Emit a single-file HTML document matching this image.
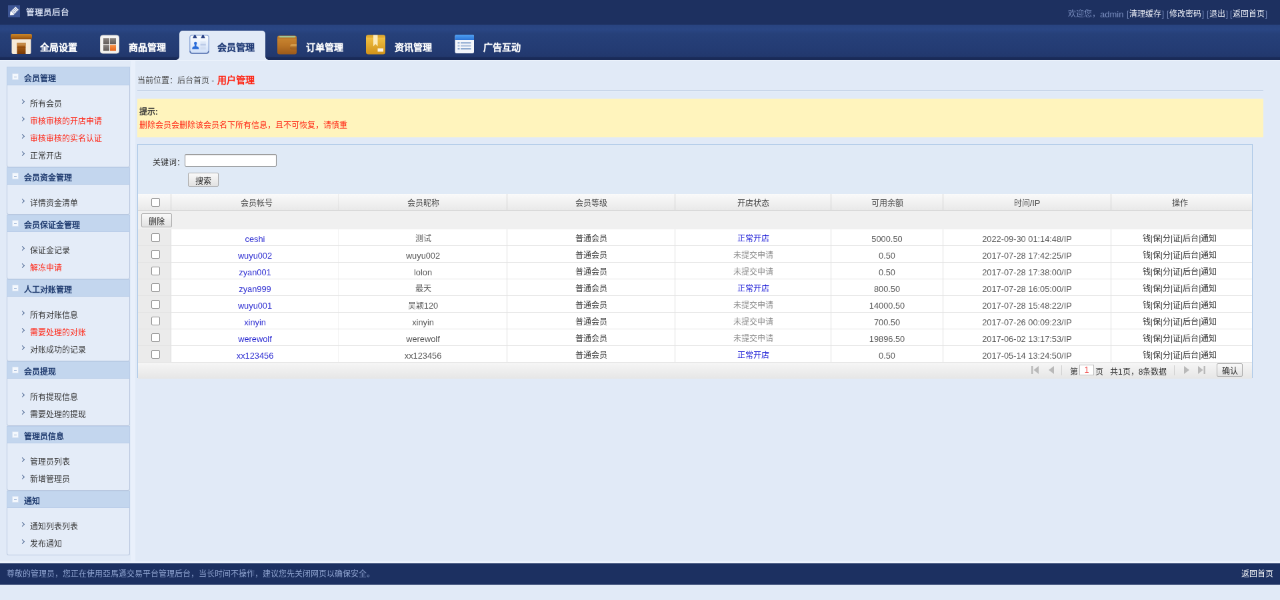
<!DOCTYPE html>
<html lang="zh-CN">
<head>
<meta charset="utf-8">
<title>管理员后台</title>
<style>
*{box-sizing:border-box;margin:0;padding:0}
html,body{width:1280px;height:600px;overflow:hidden;background:#e1eaf7}
body{font-family:"Liberation Sans",sans-serif;font-size:12px;color:#333}
a{text-decoration:none;color:inherit}
ul{list-style:none}
#stage{position:absolute;left:0;top:0;width:1920px;height:900px;transform:scale(0.666667);transform-origin:0 0;background:#e1eaf7;overflow:hidden;will-change:transform}
/* top bar */
#top{position:absolute;left:0;top:0;width:1920px;height:89px;background:#1d3060;color:#fff}
#top .logo{position:absolute;left:12px;top:8px;width:18px;height:18px}
#top .title{position:absolute;left:39px;top:0;line-height:37px;font-family:"Liberation Sans",sans-serif;font-weight:bold;font-size:12.5px;color:#d3dbee;line-height:38px}
#top .user span{position:absolute;top:0;line-height:43px;font-size:12px;color:#7b8fc0;white-space:nowrap}
#top .user a{color:#f0f3fa;padding:0 .7px}
/* nav */
#nav{position:absolute;left:0;top:37px;width:1920px;height:52.5px;background:linear-gradient(#28437f 0,#2a4684 7px,#264079 14px,#243c74 34px,#22386d 48px,#1a2b58 49.5px,#1a2b58 53px)}
#vband{position:absolute;left:195.5px;top:90px;width:7.5px;height:755px;background:#e9f0fb}
#hband{position:absolute;left:0;top:841.5px;width:1920px;height:3.5px;background:#ecf2fc}
#navline{position:absolute;left:0;top:89.5px;width:1920px;height:1.5px;background:#edf3fc}
#nav .tab{position:absolute;top:9px;width:129px;height:43px;color:#fff;font-size:14px;font-weight:bold;text-shadow:0 0 .7px rgba(255,255,255,.8)}
#nav .tab svg{position:absolute;left:15px;top:5px;width:30px;height:30px}
#nav .tab span{position:absolute;left:57px;top:0;line-height:50px;white-space:nowrap}
#nav .tab.on{background:#e1eaf7;border-radius:5px 5px 0 0;color:#1f3a75;height:44px;text-shadow:0 0 .7px rgba(31,58,117,.8)}
#nav .tab.on:before,#nav .tab.on:after{content:"";position:absolute;bottom:0;width:5px;height:5px}
#nav .tab.on:before{left:-5px;background:radial-gradient(circle at 0 0,rgba(225,234,247,0) 4.5px,#e1eaf7 5px)}
#nav .tab.on:after{right:-5px;background:radial-gradient(circle at 100% 0,rgba(225,234,247,0) 4.5px,#e1eaf7 5px)}
/* sidebar */
#side{position:absolute;left:10px;top:100px;width:185px}
#side h3{height:28px;line-height:35px;overflow:hidden;background:#c3d6ee;border:1px solid #b9cde8;font-size:12px;font-weight:bold;color:#1e3a6e;padding-left:25px;position:relative}
#side h3 i{position:absolute;left:7px;top:9px;width:10px;height:10px;background:#f4f8fd;border:1px solid #d5e1f2;border-radius:1px}
#side h3 i:after{content:"";position:absolute;left:2px;top:4px;width:4px;height:1px;background:#9db4d6}
#side h3:not(:first-child){margin-top:0;height:26px;line-height:31px}
#side h3:not(:first-child) i{top:7px}
#side ul{padding:13px 0 5px;background:#e4ecf8;border:1px solid #b9c7de;border-top:0;border-radius:0 0 3px 3px}
#side li{height:26px;line-height:30px;padding-left:34px;position:relative;color:#333;white-space:nowrap}
#side li.r{color:#f21}
#side li:before{content:"";position:absolute;left:20px;top:9px;width:4px;height:4px;border-right:1.5px solid #4a6590;border-top:1.5px solid #4a6590;transform:rotate(45deg)}
/* main */
#crumb{position:absolute;left:206px;top:100px;width:1689px;height:36px;line-height:40px;border-bottom:1px solid #bfcde3;box-shadow:0 1px 0 #e9f0fa;color:#444}
#crumb b{color:#f21;font-size:14px;margin-left:1.5px}
#tip{position:absolute;left:206px;top:148px;width:1689px;height:58px;background:#fff4bd;padding:10px 3px;line-height:20px}
#tip b{color:#333}
#tip p{color:#f21}
#panel{position:absolute;left:206px;top:216px;width:1673px;height:351px;border:1px solid #a9c6e6;background:#e0eaf6}

/* panel contents */
#panel .kw{position:absolute;left:22px;top:17px;line-height:20px;color:#333}
#panel .inp{position:absolute;left:70px;top:14px;width:138px;height:19px;background:#fff;border:1px solid #8f8f8f;border-radius:2px;box-shadow:inset 0 1px 1px #ccc}
.btn{position:absolute;height:21px;line-height:25px;overflow:hidden;text-align:center;border:1px solid #a8a8a8;border-radius:2px;background:linear-gradient(#f9f9f9,#e2e2e2);color:#222;font-size:12px}
#grid{position:absolute;left:0;top:74px;width:1671px}
#grid .row{position:relative;height:25px;display:flex;background:#fff;border-bottom:1px solid #e3e3e3}
#grid .row div{height:100%;line-height:29px;text-align:center;border-right:1px solid #dcdcdc;white-space:nowrap;overflow:hidden;color:#555;flex:none}
#grid .row div:last-child{border-right:0}
#grid .hd{height:25px;background:linear-gradient(#fafafa,#e9e9e9);border-bottom:1px solid #d3d3d3}
#grid .hd div{line-height:28px;color:#444;border-right:1px solid #cfcfcf}
#grid .tb{position:relative;height:28px;background:#f0f0f0}
#grid .c0{width:50px;background:#ebebeb}
#grid .hd .c0{background:none}
#grid .c1{width:252px}#grid .c2{width:252px}#grid .c3{width:252px}#grid .c4{width:234px}#grid .c5{width:168px}#grid .c6{width:252px}#grid .c7{width:211px;padding-right:6px}
#grid .row .c1{color:#2b2bd1}
#grid .row .c1,#grid .row .c2,#grid .row .c5,#grid .row .c6{font-size:12.8px}
#grid .row .c3,#grid .row .c7{color:#333}
#grid .row .ok{color:#1a1ad6}
#grid .row .no{color:#8a8a8a}
#grid .hd div{font-size:12px!important;color:#444!important}
#grid .hd .c1{padding-left:4px}
.cb{display:inline-block;width:13px;height:13px;border:1px solid #8a8a8a;border-radius:2px;background:#fff;vertical-align:middle;position:relative;top:-2.5px;left:1.5px}
#pager{position:relative;height:24px;background:linear-gradient(#f6f6f6,#e6e6e6);font-size:12px;color:#333}
#pager span{position:absolute;top:0;line-height:28px;white-space:nowrap}
#pager .pi{position:absolute;top:3px;width:22px;height:16px;background:#fff;border:1px solid #bdbdbd;color:#e33;text-align:center;line-height:15px}
#pager .sep{position:absolute;top:4px;width:1px;height:15px;background:#cfcfcf}
#pager svg{position:absolute;top:5px;height:12px}
/* footer */
#foot{position:absolute;left:0;top:845px;width:1920px;height:32px;background:#1c3061;color:#8ea3d0;line-height:33px;padding-left:10px}
#foot a{position:absolute;right:10px;top:0;color:#fff}
</style>
</head>
<body>
<div id="stage">
<div id="top">
  <svg class="logo" viewBox="0 0 18 18"><rect width="18" height="18" fill="#3d5594"/><g transform="rotate(-45 9 9)"><path d="M0.5 9 L4.5 5.6 H15.5 V12.4 H4.5Z" fill="#fff"/><path d="M6.6 5.6V12.4M8.9 5.6V12.4M11.2 5.6V12.4M13.5 5.6V12.4" stroke="#3d5594" stroke-width=".8"/></g></svg>
  <div class="title">管理员后台</div>
  <div class="user"><span style="left:1602px">欢迎您，</span><span style="left:1650px;font-size:13px">admin</span><span style="left:1690px">[<a>清理缓存</a>]</span><span style="left:1750px">[<a>修改密码</a>]</span><span style="left:1810px">[<a>退出</a>]</span><span style="left:1845px">[<a>返回首页</a>]</span></div>
</div>
<div id="nav">
  <div class="tab" style="left:3px"><svg viewBox="0 0 32 30" style="left:13px;width:32px"><defs><linearGradient id="g1a" x1="0" y1="0" x2="0" y2="1"><stop offset="0" stop-color="#cb8627"/><stop offset=".8" stop-color="#a05a12"/><stop offset="1" stop-color="#7e420b"/></linearGradient><linearGradient id="g1b" x1="0" y1="0" x2="0" y2="1"><stop offset="0" stop-color="#bb6d1e"/><stop offset="1" stop-color="#7a3a05"/></linearGradient></defs><rect x="1.5" y="3" width="29" height="27" rx="2" fill="#f6ead8"/><rect x="0" y="0" width="32" height="8" rx="2" fill="url(#g1a)"/><rect x="9.5" y="13" width="13" height="17" fill="url(#g1b)"/><rect x="9.5" y="13" width="13" height="4.5" fill="#c48a48"/><rect x="9.5" y="19.5" width="13" height="1" fill="#6d3204" opacity=".5"/></svg><span>全局设置</span></div>
  <div class="tab" style="left:136px"><svg viewBox="0 0 30 30" style="left:14px"><defs><linearGradient id="g2a" x1="0" y1="0" x2="0" y2="1"><stop offset="0" stop-color="#8b8581"/><stop offset="1" stop-color="#625c59"/></linearGradient><linearGradient id="g2b" x1="0" y1="0" x2="0" y2="1"><stop offset="0" stop-color="#f8954a"/><stop offset="1" stop-color="#e8651a"/></linearGradient></defs><rect x=".5" y="2" width="28" height="27" rx="3.5" fill="#f5f4f2" stroke="#dcd8d2" stroke-width="1"/><rect x="5" y="6.2" width="9" height="9" fill="url(#g2a)"/><rect x="15" y="6.2" width="9" height="9" fill="url(#g2a)"/><rect x="5" y="16.2" width="9" height="9" fill="url(#g2a)"/><rect x="15" y="16.2" width="9" height="9" fill="url(#g2b)"/></svg><span>商品管理</span></div>
  <div class="tab on" style="left:269px"><svg viewBox="0 0 30 30"><defs><linearGradient id="g3a" x1="0" y1="0" x2="0" y2="1"><stop offset="0" stop-color="#fdfeff"/><stop offset="1" stop-color="#cfdff8"/></linearGradient></defs><rect x=".75" y="1.75" width="28.5" height="27" rx="3.5" fill="url(#g3a)" stroke="#93acd9" stroke-width="1.5"/><path d="M1.2 25.5 Q1.2 29 4.5 29 H25.5 Q28.8 29 28.8 25.5" stroke="#5672ae" stroke-width="1.7" fill="none"/><path d="M5 6.3 L7.3 1.6 H9.3 L11.6 6.3Z M17.3 6.3 L19.5 1.6 H21.5 L23.7 6.3Z" fill="#2c4487"/><circle cx="9.2" cy="14" r="2.2" fill="#2a6cd8"/><path d="M8.1 15.5 H10.3 L10.7 18.5 C13 18.8 14.3 19.8 14.3 22.7 H4.2 C4.2 19.8 5.5 18.8 7.7 18.5Z" fill="#2a6cd8"/><rect x="16.5" y="11.3" width="8.3" height="2" fill="#dbe5f5"/><rect x="16.5" y="14.5" width="8.3" height="3" fill="#bccbe8"/><rect x="16.5" y="18.7" width="8.3" height="2" fill="#cfdbf0"/><rect x="16.5" y="21.7" width="8.3" height="1.3" fill="#c3d0e8"/></svg><span>会员管理</span></div>
  <div class="tab" style="left:402px"><svg viewBox="0 0 30 30" style="left:13.5px;top:6px"><defs><linearGradient id="g4a" x1="0" y1="0" x2="0" y2="1"><stop offset="0" stop-color="#cc8a33"/><stop offset=".5" stop-color="#bb7526"/><stop offset="1" stop-color="#9c5a1a"/></linearGradient></defs><rect x="0" y="1.5" width="29" height="28" rx="3" fill="url(#g4a)"/><rect x="3" y="2" width="24" height="2.5" rx="1" fill="#a3c694"/><rect x="0" y="4.5" width="29" height="1" fill="#a4621c" opacity=".7"/><path d="M29 14 H22 Q19.5 14 19.5 16.2 V18.5 Q19.5 20.8 22 20.8 H29Z" fill="#d29a4b"/><path d="M29 17.5 H19.5 V18.5 Q19.5 20.8 22 20.8 H29Z" fill="#a86a25"/><path d="M29 20.8 H22 Q19.5 20.8 19.3 18.5 L19.3 20 Q19.5 22 22 22 H29Z" fill="#7f4712" opacity=".7"/></svg><span>订单管理</span></div>
  <div class="tab" style="left:535px"><svg viewBox="0 0 30 30" style="left:13.5px;top:6px"><defs><linearGradient id="g5a" x1="0" y1="0" x2="0" y2="1"><stop offset="0" stop-color="#f4c648"/><stop offset="1" stop-color="#d1921a"/></linearGradient></defs><rect x="0" y=".5" width="29" height="29" rx="3.5" fill="url(#g5a)"/><rect x="0" y=".5" width="29" height="4" rx="2" fill="#d9a028" opacity=".7"/><path d="M11 .5 H17.5 V17.5 L14.25 14 L11 17.5Z" fill="#fbebbd"/><rect x="17.5" y="20.5" width="8.5" height="5" fill="#fbf3e2"/></svg><span>资讯管理</span></div>
  <div class="tab" style="left:668px"><svg viewBox="0 0 30 30" style="left:14px"><defs><linearGradient id="g6a" x1="0" y1="0" x2="0" y2="1"><stop offset="0" stop-color="#4fa0f2"/><stop offset="1" stop-color="#2c74d6"/></linearGradient></defs><rect x=".5" y="1" width="28.5" height="28" rx="2.5" fill="#f3f6fb"/><path d="M.5 9 V3.5 Q.5 1 3 1 H26.5 Q29 1 29 3.5 V9Z" fill="url(#g6a)"/><g fill="#8eaad0"><rect x="4.5" y="12.2" width="3" height="2.2"/><rect x="9" y="12.2" width="15.5" height="2.2"/><rect x="4.5" y="16.6" width="3" height="2.2" opacity=".7"/><rect x="9" y="16.6" width="15.5" height="2.2" opacity=".7"/><rect x="4.5" y="21" width="3" height="2.4"/><rect x="9" y="21" width="15.5" height="2.4"/></g></svg><span>广告互动</span></div>
</div>
<div id="vband"></div><div id="hband"></div><div id="navline"></div>
<div id="side">
  <h3><i></i>会员管理</h3>
  <ul><li>所有会员</li><li class="r">审核审核的开店申请</li><li class="r">审核审核的实名认证</li><li>正常开店</li></ul>
  <h3><i></i>会员资金管理</h3>
  <ul><li>详情资金清单</li></ul>
  <h3><i></i>会员保证金管理</h3>
  <ul><li>保证金记录</li><li class="r">解冻申请</li></ul>
  <h3><i></i>人工对账管理</h3>
  <ul><li>所有对账信息</li><li class="r">需要处理的对账</li><li>对账成功的记录</li></ul>
  <h3><i></i>会员提现</h3>
  <ul><li>所有提现信息</li><li>需要处理的提现</li></ul>
  <h3><i></i>管理员信息</h3>
  <ul><li>管理员列表</li><li>新增管理员</li></ul>
  <h3><i></i>通知</h3>
  <ul style="padding-bottom:5px"><li>通知列表列表</li><li>发布通知</li></ul>
</div>
<div id="crumb">当前位置：后台首页 - <b>用户管理</b></div>
<div id="tip"><b>提示:</b><p>删除会员会删除该会员名下所有信息，且不可恢复，请慎重</p></div>
<div id="panel">
<span class="kw">关键词：</span><div class="inp"></div><div class="btn" style="left:75px;top:42px;width:46px">搜索</div>
<div id="grid">
<div class="row hd"><div class="c0"><i class="cb"></i></div><div class="c1">会员帐号</div><div class="c2">会员昵称</div><div class="c3">会员等级</div><div class="c4">开店状态</div><div class="c5">可用余额</div><div class="c6">时间<span style="font-size:12.8px">/IP</span></div><div class="c7">操作</div></div>
<div class="tb"><div class="btn" style="left:5px;top:3.5px;width:46px">删除</div></div>
<div class="row"><div class="c0"><i class="cb"></i></div><div class="c1">ceshi</div><div class="c2" style="font-size:12px">测试</div><div class="c3">普通会员</div><div class="c4 ok">正常开店</div><div class="c5">5000.50</div><div class="c6">2022-09-30 01:14:48/IP</div><div class="c7">钱|保|分|证|后台|通知</div></div>
<div class="row"><div class="c0"><i class="cb"></i></div><div class="c1">wuyu002</div><div class="c2">wuyu002</div><div class="c3">普通会员</div><div class="c4 no">未提交申请</div><div class="c5">0.50</div><div class="c6">2017-07-28 17:42:25/IP</div><div class="c7">钱|保|分|证|后台|通知</div></div>
<div class="row"><div class="c0"><i class="cb"></i></div><div class="c1">zyan001</div><div class="c2">lolon</div><div class="c3">普通会员</div><div class="c4 no">未提交申请</div><div class="c5">0.50</div><div class="c6">2017-07-28 17:38:00/IP</div><div class="c7">钱|保|分|证|后台|通知</div></div>
<div class="row"><div class="c0"><i class="cb"></i></div><div class="c1">zyan999</div><div class="c2" style="font-size:12px">最天</div><div class="c3">普通会员</div><div class="c4 ok">正常开店</div><div class="c5">800.50</div><div class="c6">2017-07-28 16:05:00/IP</div><div class="c7">钱|保|分|证|后台|通知</div></div>
<div class="row"><div class="c0"><i class="cb"></i></div><div class="c1">wuyu001</div><div class="c2" style="font-size:12px">吴颖<span style="font-size:12.8px">120</span></div><div class="c3">普通会员</div><div class="c4 no">未提交申请</div><div class="c5">14000.50</div><div class="c6">2017-07-28 15:48:22/IP</div><div class="c7">钱|保|分|证|后台|通知</div></div>
<div class="row"><div class="c0"><i class="cb"></i></div><div class="c1">xinyin</div><div class="c2">xinyin</div><div class="c3">普通会员</div><div class="c4 no">未提交申请</div><div class="c5">700.50</div><div class="c6">2017-07-26 00:09:23/IP</div><div class="c7">钱|保|分|证|后台|通知</div></div>
<div class="row"><div class="c0"><i class="cb"></i></div><div class="c1">werewolf</div><div class="c2">werewolf</div><div class="c3">普通会员</div><div class="c4 no">未提交申请</div><div class="c5">19896.50</div><div class="c6">2017-06-02 13:17:53/IP</div><div class="c7">钱|保|分|证|后台|通知</div></div>
<div class="row"><div class="c0"><i class="cb"></i></div><div class="c1">xx123456</div><div class="c2">xx123456</div><div class="c3">普通会员</div><div class="c4 ok">正常开店</div><div class="c5">0.50</div><div class="c6">2017-05-14 13:24:50/IP</div><div class="c7">钱|保|分|证|后台|通知</div></div>
<div id="pager">
<svg style="left:1340px;width:11px" viewBox="0 0 11 12"><rect x="0" y="0" width="2.5" height="12" fill="#b9b9b9"/><path d="M11 0 L3.5 6 L11 12Z" fill="#b9b9b9"/></svg>
<svg style="left:1366px;width:8px" viewBox="0 0 8 12"><path d="M8 0 L0 6 L8 12Z" fill="#b9b9b9"/></svg>
<i class="sep" style="left:1385px"></i>
<span style="left:1398px">第</span><div class="pi" style="left:1412px">1</div><span style="left:1436px">页</span>
<span style="left:1458px">共1页，8条数据</span>
<i class="sep" style="left:1554px"></i>
<svg style="left:1569px;width:8px" viewBox="0 0 8 12"><path d="M0 0 L8 6 L0 12Z" fill="#b9b9b9"/></svg>
<svg style="left:1590px;width:11px" viewBox="0 0 11 12"><path d="M0 0 L7.5 6 L0 12Z" fill="#b9b9b9"/><rect x="8.5" y="0" width="2.5" height="12" fill="#b9b9b9"/></svg>
<div class="btn" style="left:1618px;top:1px;width:39px;height:20px;line-height:23px">确认</div>
</div>
</div>
</div>
<div id="foot">尊敬的管理员，您正在使用亞馬遜交易平台管理后台，当长时间不操作，建议您先关闭网页以确保安全。<a>返回首页</a></div>
</div>
</body>
</html>
